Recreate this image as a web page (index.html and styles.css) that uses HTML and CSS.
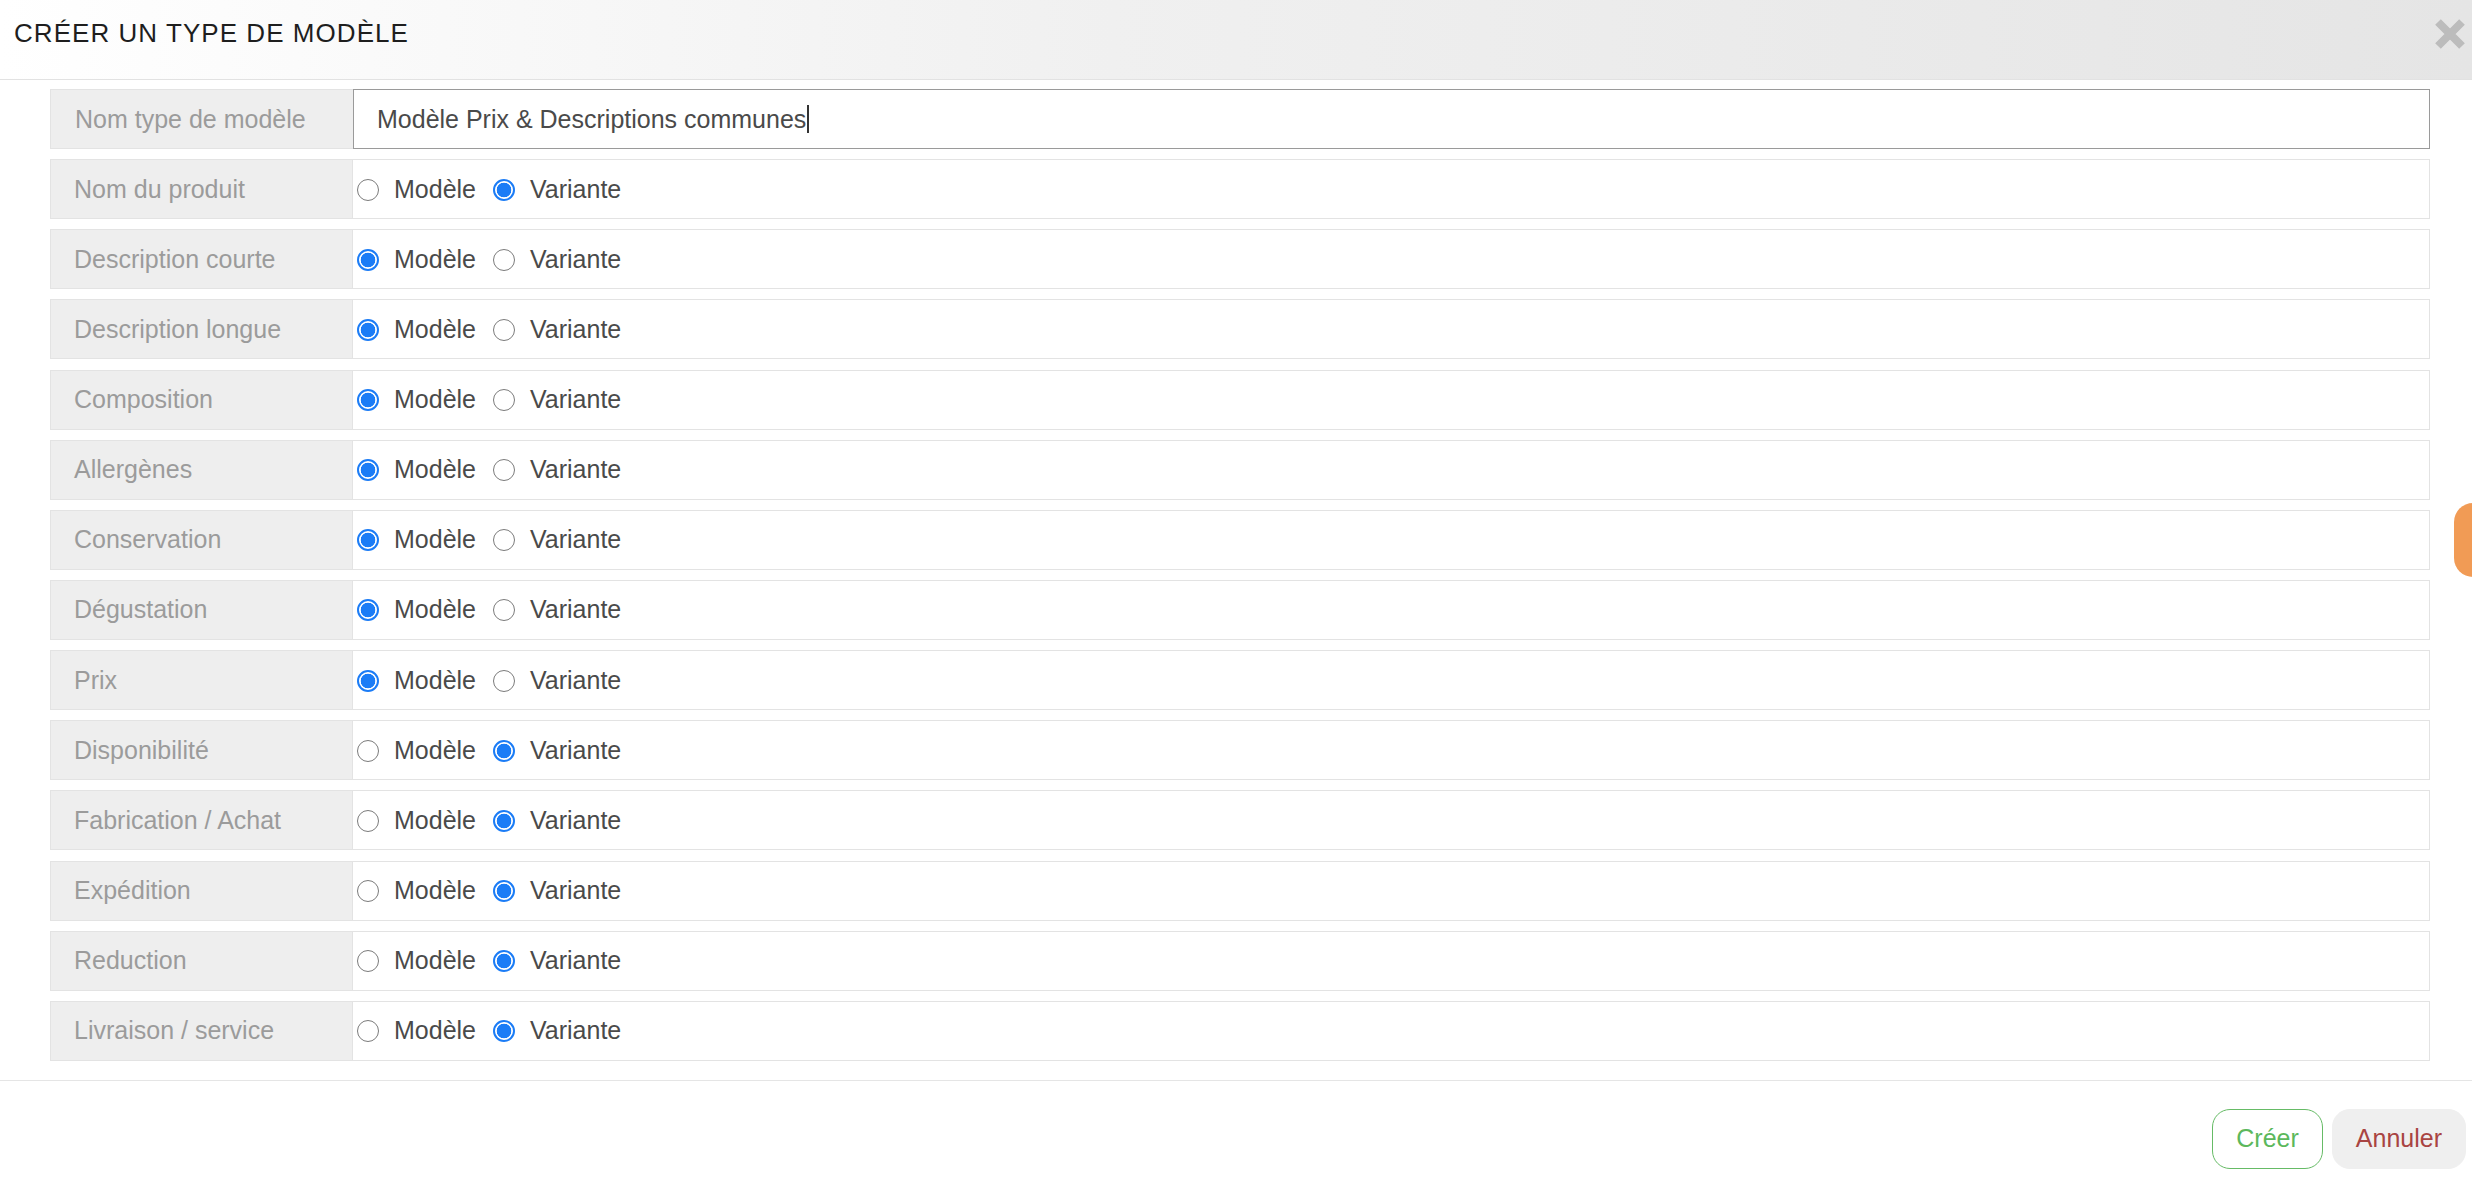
FILE: index.html
```html
<!DOCTYPE html>
<html lang="fr">
<head>
<meta charset="utf-8">
<title>Créer un type de modèle</title>
<link rel="stylesheet" href="styles.css">
</head>
<body>
<div class="modal">
  <header class="modal-header">
    <h1 class="modal-title">CRÉER UN TYPE DE MODÈLE</h1>
    <button class="close" type="button" aria-label="Fermer">
      <svg width="30" height="30" viewBox="0 0 30 30"><path d="M3 3 L27 27 M27 3 L3 27" stroke="#bcbcbc" stroke-width="8" fill="none"/></svg>
    </button>
  </header>
  <div class="modal-body">
    <div class="form-row first">
      <div class="row-label">Nom type de modèle</div>
      <div class="text-field">Modèle Prix &amp; Descriptions communes<span class="caret"></span></div>
    </div>
    <div class="form-row"><div class="row-label">Nom du produit</div><div class="row-value"><input class="radio" type="radio" name="r1"><span class="opt">Modèle</span><input class="radio" type="radio" name="r1" checked><span class="opt">Variante</span></div></div>
    <div class="form-row"><div class="row-label">Description courte</div><div class="row-value"><input class="radio" type="radio" name="r2" checked><span class="opt">Modèle</span><input class="radio" type="radio" name="r2"><span class="opt">Variante</span></div></div>
    <div class="form-row"><div class="row-label">Description longue</div><div class="row-value"><input class="radio" type="radio" name="r3" checked><span class="opt">Modèle</span><input class="radio" type="radio" name="r3"><span class="opt">Variante</span></div></div>
    <div class="form-row"><div class="row-label">Composition</div><div class="row-value"><input class="radio" type="radio" name="r4" checked><span class="opt">Modèle</span><input class="radio" type="radio" name="r4"><span class="opt">Variante</span></div></div>
    <div class="form-row"><div class="row-label">Allergènes</div><div class="row-value"><input class="radio" type="radio" name="r5" checked><span class="opt">Modèle</span><input class="radio" type="radio" name="r5"><span class="opt">Variante</span></div></div>
    <div class="form-row"><div class="row-label">Conservation</div><div class="row-value"><input class="radio" type="radio" name="r6" checked><span class="opt">Modèle</span><input class="radio" type="radio" name="r6"><span class="opt">Variante</span></div></div>
    <div class="form-row"><div class="row-label">Dégustation</div><div class="row-value"><input class="radio" type="radio" name="r7" checked><span class="opt">Modèle</span><input class="radio" type="radio" name="r7"><span class="opt">Variante</span></div></div>
    <div class="form-row"><div class="row-label">Prix</div><div class="row-value"><input class="radio" type="radio" name="r8" checked><span class="opt">Modèle</span><input class="radio" type="radio" name="r8"><span class="opt">Variante</span></div></div>
    <div class="form-row"><div class="row-label">Disponibilité</div><div class="row-value"><input class="radio" type="radio" name="r9"><span class="opt">Modèle</span><input class="radio" type="radio" name="r9" checked><span class="opt">Variante</span></div></div>
    <div class="form-row"><div class="row-label">Fabrication / Achat</div><div class="row-value"><input class="radio" type="radio" name="r10"><span class="opt">Modèle</span><input class="radio" type="radio" name="r10" checked><span class="opt">Variante</span></div></div>
    <div class="form-row"><div class="row-label">Expédition</div><div class="row-value"><input class="radio" type="radio" name="r11"><span class="opt">Modèle</span><input class="radio" type="radio" name="r11" checked><span class="opt">Variante</span></div></div>
    <div class="form-row"><div class="row-label">Reduction</div><div class="row-value"><input class="radio" type="radio" name="r12"><span class="opt">Modèle</span><input class="radio" type="radio" name="r12" checked><span class="opt">Variante</span></div></div>
    <div class="form-row"><div class="row-label">Livraison / service</div><div class="row-value"><input class="radio" type="radio" name="r13"><span class="opt">Modèle</span><input class="radio" type="radio" name="r13" checked><span class="opt">Variante</span></div></div>
  </div>
  <footer class="modal-footer">
    <button class="btn btn-create" type="button">Créer</button>
    <button class="btn btn-cancel" type="button">Annuler</button>
  </footer>
</div>
<div class="feedback-tab"></div>
</body>
</html>
```

FILE: styles.css
```css
html, body {
  margin: 0;
  padding: 0;
  background: #fff;
  overflow: hidden;
}
body {
  font-family: "Liberation Sans", Arial, sans-serif;
  width: 2472px;
  height: 1180px;
}
.modal {
  display: flex;
  flex-direction: column;
  height: 1180px;
}
.modal-header {
  box-sizing: border-box;
  height: 80px;
  display: flex;
  justify-content: space-between;
  align-items: flex-start;
  padding: 18px 7px 0 14px;
  background: linear-gradient(to right, #ffffff 0%, #f0f0f0 45%, #e5e5e5 100%);
  border-bottom: 1px solid #e2e2e2;
}
.modal-title {
  margin: 0;
  font-size: 26px;
  font-weight: normal;
  letter-spacing: 1.05px;
  color: #1e1e1e;
  line-height: 30px;
}
.close {
  border: 0;
  padding: 0;
  margin: 1px 0 0 0;
  background: none;
  width: 30px;
  height: 30px;
  display: block;
}
.close svg { display: block; }
.modal-body {
  display: flex;
  flex-direction: column;
  gap: 10.15px;
  padding: 9px 42px 19px 50px;
}
.form-row {
  box-sizing: border-box;
  height: 60px;
  display: flex;
  border: 1px solid #e3e3e3;
  font-size: 25px;
}
.form-row.first {
  border: 0;
}
.row-label {
  box-sizing: border-box;
  width: 302px;
  flex: none;
  display: flex;
  align-items: center;
  padding-left: 23px;
  background: #eeeeee;
  border-right: 1px solid #e3e3e3;
  color: #9b9b9b;
}
.form-row.first .row-label {
  width: 303px;
  border: 1px solid #e3e3e3;
  border-right: 0;
  padding-left: 24px;
}
.row-value {
  flex: 1;
  display: flex;
  align-items: center;
  padding-left: 4px;
  color: #4a4a4a;
}
.text-field {
  flex: 1;
  box-sizing: border-box;
  display: flex;
  align-items: center;
  border: 1px solid #9a9a9a;
  padding-left: 23px;
  color: #4a4a4a;
  background: #fff;
}
.caret {
  display: inline-block;
  width: 2px;
  height: 28px;
  background: #333;
  margin-left: 1px;
}
.radio {
  appearance: none;
  -webkit-appearance: none;
  box-sizing: border-box;
  width: 22px;
  height: 22px;
  margin: 1px 15px 0 0;
  border: 1.5px solid #7b7b7b;
  border-radius: 50%;
  background: #fff;
  flex: none;
}
.radio:checked {
  border: 2px solid #1b7cf6;
  background: radial-gradient(circle, #1b7cf6 0 7px, #ffffff 7.6px);
}
.opt {
  margin-right: 17px;
}
.modal-footer {
  display: flex;
  justify-content: flex-end;
  gap: 9px;
  border-top: 1px solid #e5e5e5;
  padding: 28px 6px 0 0;
}
.btn {
  box-sizing: border-box;
  height: 60px;
  padding: 0 23px;
  border-radius: 18px;
  font-family: "Liberation Sans", Arial, sans-serif;
  font-size: 25px;
  cursor: pointer;
}
.btn-create {
  background: #fff;
  border: 1px solid #66bb66;
  color: #5cb85c;
}
.btn-cancel {
  background: #efefef;
  border: 1px solid #efefef;
  color: #a94442;
}
.feedback-tab {
  position: fixed;
  right: -20px;
  top: 503px;
  width: 38px;
  height: 74px;
  background: #f19b55;
  border-radius: 24px;
}
```
